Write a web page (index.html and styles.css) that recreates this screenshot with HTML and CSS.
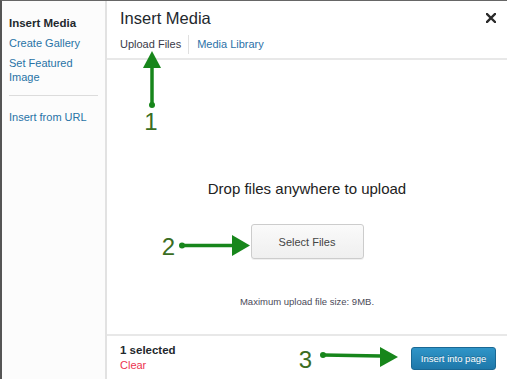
FILE: index.html
```html
<!DOCTYPE html>
<html lang="en">
<head>
    <meta charset="UTF-8">
    <meta name="viewport" content="width=device-width, initial-scale=1.0">
    <title>Insert Media</title>
    <link rel="stylesheet" href="styles.css">
</head>
<body>
<div class="frame">
    <div class="sidebar">
        <div class="menu-item active">Insert Media</div>
        <div class="menu-item">Create Gallery</div>
        <div class="menu-item">Set Featured Image</div>
        <div class="menu-sep"></div>
        <div class="menu-item">Insert from URL</div>
    </div>
    <div class="main">
        <div class="header">
            <h1 class="title">Insert Media</h1>
            <div class="close">
                <svg width="10" height="10" viewBox="0 0 10 10">
                    <path d="M1 1 L9 9 M9 1 L1 9" stroke="#2a2a2a" stroke-width="2.4" stroke-linecap="square"/>
                </svg>
            </div>
            <div class="tabs">
                <span class="tab current">Upload Files</span>
                <span class="tab">Media Library</span>
            </div>
        </div>
        <div class="upload-area">
            <p class="drop-text">Drop files anywhere to upload</p>
            <button class="select-button">Select Files</button>
            <p class="max-size">Maximum upload file size: 9MB.</p>
        </div>
        <div class="footer">
            <div class="selection">
                <div class="count">1 selected</div>
                <div class="clear">Clear</div>
            </div>
            <button class="insert-button">Insert into page</button>
        </div>
    </div>
</div>

<!-- Annotation arrows -->
<svg class="annotations" width="507" height="379" viewBox="0 0 507 379">
    <g fill="#17861b" stroke="#17861b">
        <circle cx="152" cy="105" r="3" stroke="none"/>
        <line x1="152" y1="105" x2="152" y2="67" stroke-width="3.5"/>
        <polygon points="143,68 161,68 152,51" stroke="none"/>

        <circle cx="182" cy="245.5" r="3" stroke="none"/>
        <line x1="182" y1="245.5" x2="233" y2="245.5" stroke-width="3.5"/>
        <polygon points="232,235 232,256 250,245.5" stroke="none"/>

        <circle cx="323" cy="355" r="3" stroke="none"/>
        <line x1="323" y1="355" x2="381" y2="356" stroke-width="3.5"/>
        <polygon points="380,347 380,367 398,357" stroke="none"/>
    </g>
    <g class="numbers" fill="#3a6d22">
        <text x="151" y="130">1</text>
        <text x="168.5" y="255">2</text>
        <text x="305.5" y="368">3</text>
    </g>
</svg>
</body>
</html>
```

FILE: styles.css
```css
/* General styles */
body {
    margin: 0;
    padding: 0;
    font-family: 'Liberation Sans', Arial, sans-serif;
    background-color: #fff;
    width: 507px;
    height: 379px;
    overflow: hidden;
    position: relative;
}

.frame {
    display: flex;
    height: 378px;
    border-top: 1px solid #666;
    border-left: 2px solid #555;
}

/* Sidebar styles */
.sidebar {
    width: 105px;
    flex-shrink: 0;
    box-sizing: border-box;
    padding: 15px 7px 0 7px;
    background-color: #fcfcfc;
    border-right: 2px solid #e2e2e2;
}

.menu-item {
    font-size: 11px;
    line-height: 14px;
    margin-bottom: 6px;
    color: #2873a6;
}

.menu-item.active {
    font-size: 11.5px;
    font-weight: bold;
    color: #23282d;
}

.menu-sep {
    height: 1px;
    background-color: #dcdcdc;
    margin: 11px 0 14px 0;
}

/* Main area */
.main {
    flex: 1;
    display: flex;
    flex-direction: column;
}

.header {
    position: relative;
    padding: 7px 0 4px 13px;
    border-bottom: 2px solid #e8e8e8;
}

.title {
    margin: 0;
    font-size: 16.5px;
    font-weight: normal;
    line-height: 20px;
    color: #23282d;
}

.close {
    position: absolute;
    top: 12px;
    right: 11px;
    width: 10px;
    height: 10px;
    line-height: 0;
}

.tabs {
    display: flex;
    margin-top: 7px;
    font-size: 11px;
    line-height: 19px;
}

.tab {
    color: #2c72a8;
    padding: 0 8px;
}

.tab.current {
    color: #3a3a48;
    padding: 0 7px 0 0;
    border-right: 1px solid #e0e0e0;
}

/* Upload area */
.upload-area {
    flex: 1;
    display: flex;
    flex-direction: column;
    align-items: center;
    padding-top: 120px;
}

.drop-text {
    margin: 0;
    font-size: 15px;
    line-height: 17px;
    color: #222;
}

.select-button {
    margin-top: 27px;
    width: 113px;
    height: 35px;
    font-family: inherit;
    font-size: 11px;
    color: #444;
    background: linear-gradient(#fafafa, #efefef);
    border: 1px solid #cccccc;
    border-radius: 3px;
    box-shadow: 0 1px 0 rgba(0, 0, 0, 0.06);
}

.max-size {
    margin: 37px 0 0 0;
    font-size: 9.5px;
    line-height: 12px;
    color: #4b4a58;
}

/* Footer */
.footer {
    display: flex;
    justify-content: space-between;
    align-items: flex-start;
    height: 43px;
    padding: 0 11px 0 13px;
    border-top: 2px solid #e8e8e8;
}

.count {
    margin-top: 7px;
    font-size: 11.5px;
    font-weight: bold;
    line-height: 15px;
    color: #23282d;
}

.clear {
    font-size: 11px;
    line-height: 15px;
    color: #ec3550;
}

.insert-button {
    margin-top: 11px;
    width: 85px;
    height: 23px;
    padding: 0;
    font-family: inherit;
    font-size: 9.5px;
    color: #fff;
    background: linear-gradient(#2f95c8, #1f78aa);
    border: 1px solid #1a6894;
    border-radius: 3px;
    text-shadow: 0 -1px 0 rgba(0, 0, 0, 0.25);
}

/* Arrows drawn on top */
.annotations {
    position: absolute;
    top: 0;
    left: 0;
    pointer-events: none;
}

.numbers text {
    font-family: 'Liberation Sans', Arial, sans-serif;
    font-size: 24px;
    text-anchor: middle;
}
```
